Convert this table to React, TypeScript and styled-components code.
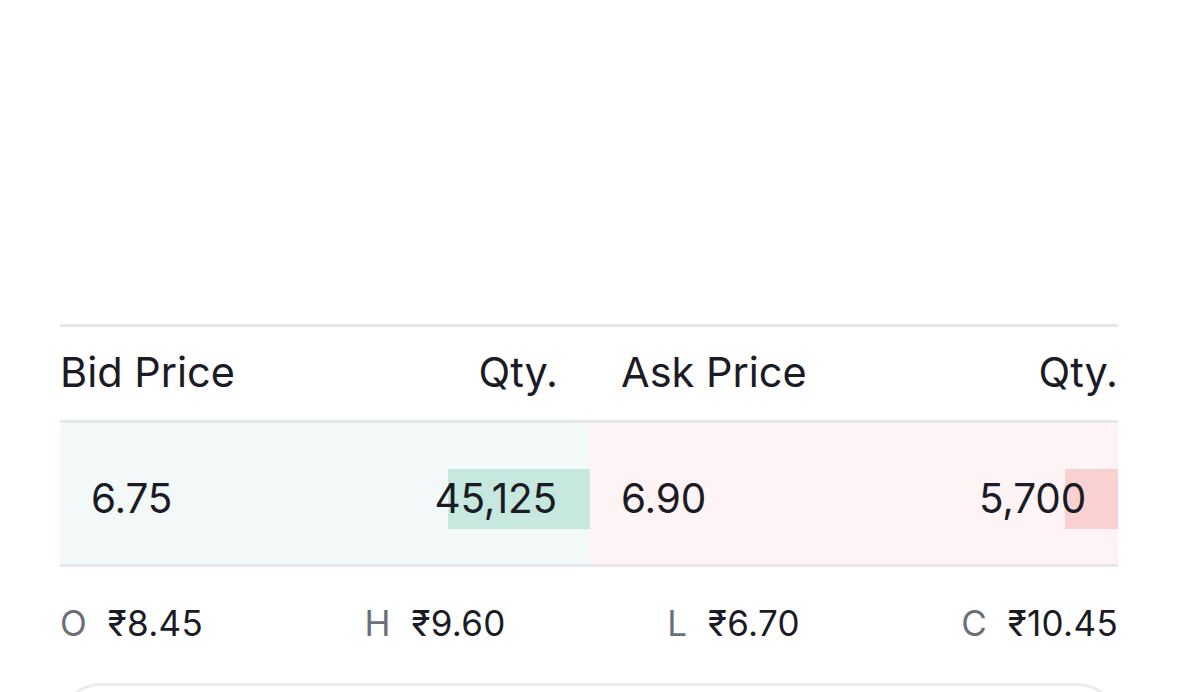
import React from "react";
import styled, { createGlobalStyle } from "styled-components";

const Global = createGlobalStyle`
  html, body { margin: 0; padding: 0; background: #ffffff; }
  body { font-family: Inter, "Noto Sans", sans-serif; color: #1b1b26; overflow: hidden; }
`;

const Page = styled.div`
  width: 1179px;
  height: 692px;
  box-sizing: border-box;
  padding: 324px 61px 0 60px;
  display: flex;
  flex-direction: column;
  overflow: hidden;
`;

const Divider = styled.div`
  height: 3px;
  background: #e6e6ec;
  flex: none;
`;

const Grid = styled.div<{ $height: number }>`
  display: grid;
  grid-template-columns: 530px 1fr;
  height: ${(p) => p.$height}px;
  flex: none;
`;

const HeaderCell = styled.div<{ $pl: number; $pr: number }>`
  display: flex;
  align-items: center;
  justify-content: space-between;
  box-sizing: border-box;
  padding: 0 ${(p) => p.$pr}px 4px ${(p) => p.$pl}px;
  font-size: 41.5px;
  font-weight: 400;
  color: #1b1b26;
`;

const DataCell = styled.div<{ $side: "bid" | "ask"; $pl: number; $pr: number }>`
  position: relative;
  display: flex;
  align-items: center;
  justify-content: space-between;
  box-sizing: border-box;
  padding: 9px ${(p) => p.$pr}px 0 ${(p) => p.$pl}px;
  background: ${(p) => (p.$side === "bid" ? "#f3f9f8" : "#fef4f5")};
  font-size: 40.5px;
  color: #1b1b26;
`;

const Bar = styled.div<{ $side: "bid" | "ask" }>`
  position: absolute;
  right: 0;
  top: 46px;
  height: 60px;
  background: ${(p) => (p.$side === "bid" ? "#c6e8df" : "#f9d1d3")};
`;

const Value = styled.span`
  position: relative;
  letter-spacing: -0.2px;
`;

const Stats = styled.div`
  height: 116px;
  flex: none;
  display: flex;
  align-items: center;
  justify-content: space-between;
  box-sizing: border-box;
  padding-bottom: 4px;
`;

const Stat = styled.div`
  display: flex;
  align-items: center;
  gap: 21px;
  font-size: 35px;
`;

const StatLabel = styled.span`
  color: #6c6f7b;
`;

const StatValue = styled.span`
  color: #1b1b26;
  letter-spacing: 0.3px;
`;

const Card = styled.div`
  height: 60px;
  border: 3px solid #ececee;
  border-bottom: none;
  border-radius: 40px 40px 0 0;
  flex: none;
`;

const stats = [
  { label: "O", value: "₹8.45" },
  { label: "H", value: "₹9.60" },
  { label: "L", value: "₹6.70" },
  { label: "C", value: "₹10.45" },
];

export default function App() {
  return (
    <>
      <Global />
      <Page>
        <Divider />
        <Grid $height={93}>
          <HeaderCell $pl={0} $pr={32}>
            <span>Bid Price</span>
            <span>Qty.</span>
          </HeaderCell>
          <HeaderCell $pl={31} $pr={0}>
            <span>Ask Price</span>
            <span>Qty.</span>
          </HeaderCell>
        </Grid>
        <Divider />
        <Grid $height={141}>
          <DataCell $side="bid" $pl={31} $pr={33}>
            <Bar $side="bid" style={{ width: 142 }} />
            <Value>6.75</Value>
            <Value>45,125</Value>
          </DataCell>
          <DataCell $side="ask" $pl={31} $pr={32}>
            <Bar $side="ask" style={{ width: 53 }} />
            <Value>6.90</Value>
            <Value>5,700</Value>
          </DataCell>
        </Grid>
        <Divider />
        <Stats>
          {stats.map((s) => (
            <Stat key={s.label}>
              <StatLabel>{s.label}</StatLabel>
              <StatValue>{s.value}</StatValue>
            </Stat>
          ))}
        </Stats>
        <Card />
      </Page>
    </>
  );
}
